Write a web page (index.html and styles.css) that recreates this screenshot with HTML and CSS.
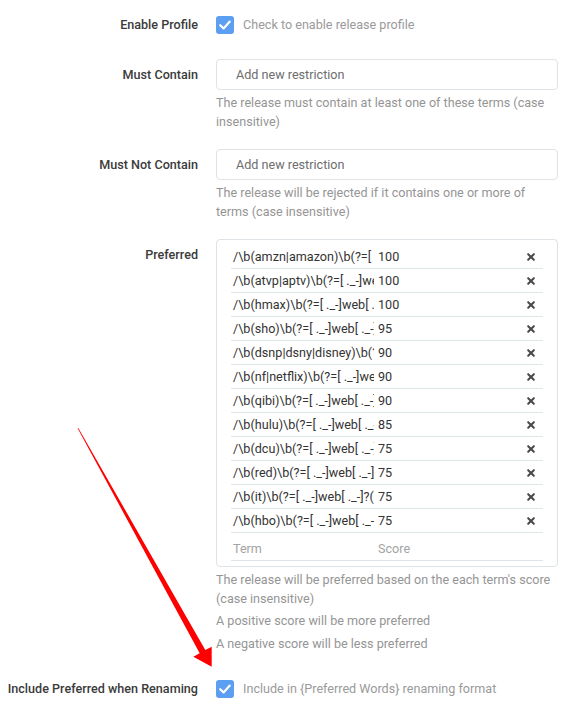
FILE: index.html
```html
<!DOCTYPE html>
<html>
<head>
<meta charset="utf-8">
<link rel="stylesheet" href="styles.css">
</head>
<body>
<div class="form">
  <div class="group">
    <div class="label">Enable Profile</div>
    <div class="field check-field">
      <span class="checkbox"><svg viewBox="0 0 18 18" width="18" height="18"><path d="M4.2 9.2 L7.6 12.4 L13.8 5.6" fill="none" stroke="#fff" stroke-width="2.2" stroke-linecap="round" stroke-linejoin="round"/></svg></span>
      <span class="check-text">Check to enable release profile</span>
    </div>
  </div>

  <div class="group">
    <div class="label">Must Contain</div>
    <div class="field">
      <div class="input"><span class="placeholder">Add new restriction</span></div>
      <p class="help">The release must contain at least one of these terms (case insensitive)</p>
    </div>
  </div>

  <div class="group">
    <div class="label">Must Not Contain</div>
    <div class="field">
      <div class="input"><span class="placeholder">Add new restriction</span></div>
      <p class="help">The release will be rejected if it contains one or more of terms (case insensitive)</p>
    </div>
  </div>

  <div class="group pref">
    <div class="label">Preferred</div>
    <div class="field">
      <div class="table">
        <div class="row"><span class="term">/\b(amzn|amazon)\b(?=[ ._-]web[ ._-]?(dl|rip)\b)/i</span><span class="score">100</span><span class="x"></span></div>
        <div class="row"><span class="term">/\b(atvp|aptv)\b(?=[ ._-]web[ ._-]?(dl|rip)\b)/i</span><span class="score">100</span><span class="x"></span></div>
        <div class="row"><span class="term">/\b(hmax)\b(?=[ ._-]web[ ._-]?(dl|rip)\b)/i</span><span class="score">100</span><span class="x"></span></div>
        <div class="row"><span class="term">/\b(sho)\b(?=[ ._-]web[ ._-]?(dl|rip)\b)/i</span><span class="score">95</span><span class="x"></span></div>
        <div class="row"><span class="term">/\b(dsnp|dsny|disney)\b(?=[ ._-]web[ ._-]?(dl|rip)\b)/i</span><span class="score">90</span><span class="x"></span></div>
        <div class="row"><span class="term">/\b(nf|netflix)\b(?=[ ._-]web[ ._-]?(dl|rip)\b)/i</span><span class="score">90</span><span class="x"></span></div>
        <div class="row"><span class="term">/\b(qibi)\b(?=[ ._-]web[ ._-]?(dl|rip)\b)/i</span><span class="score">90</span><span class="x"></span></div>
        <div class="row"><span class="term">/\b(hulu)\b(?=[ ._-]web[ ._-]?(dl|rip)\b)/i</span><span class="score">85</span><span class="x"></span></div>
        <div class="row"><span class="term">/\b(dcu)\b(?=[ ._-]web[ ._-]?(dl|rip)\b)/i</span><span class="score">75</span><span class="x"></span></div>
        <div class="row"><span class="term">/\b(red)\b(?=[ ._-]web[ ._-]?(dl|rip)\b)/i</span><span class="score">75</span><span class="x"></span></div>
        <div class="row"><span class="term">/\b(it)\b(?=[ ._-]web[ ._-]?(dl|rip)\b)/i</span><span class="score">75</span><span class="x"></span></div>
        <div class="row"><span class="term">/\b(hbo)\b(?=[ ._-]web[ ._-]?(dl|rip)\b)/i</span><span class="score">75</span><span class="x"></span></div>
        <div class="row new"><span class="term">Term</span><span class="score">Score</span></div>
      </div>
      <p class="help">The release will be preferred based on the each term's score (case insensitive)</p>
      <p class="help gap">A positive score will be more preferred</p>
      <p class="help gap">A negative score will be less preferred</p>
    </div>
  </div>

  <div class="group">
    <div class="label">Include Preferred when Renaming</div>
    <div class="field check-field">
      <span class="checkbox"><svg viewBox="0 0 18 18" width="18" height="18"><path d="M4.2 9.2 L7.6 12.4 L13.8 5.6" fill="none" stroke="#fff" stroke-width="2.2" stroke-linecap="round" stroke-linejoin="round"/></svg></span>
      <span class="check-text">Include in {Preferred Words} renaming format</span>
    </div>
  </div>
</div>

<svg class="arrow" width="568" height="711" viewBox="0 0 568 711">
  <polygon points="77.6,428.3 78.3,427.9 205.3,650.1 211.7,646.7 211.7,666.7 193.3,656.7 199.7,653.3" fill="#ff0000"/>
</svg>
</body>
</html>
```

FILE: styles.css
```css
html, body {
  margin: 0;
  padding: 0;
  background: #fff;
}
body {
  font-family: Roboto, "Liberation Sans", sans-serif;
  font-size: 12.6px;
  color: #333;
  width: 568px;
  height: 711px;
  overflow: hidden;
  position: relative;
}
.form {
  padding-top: 9px;
}
.group {
  display: grid;
  grid-template-columns: 198px 342px;
  column-gap: 18px;
  margin-bottom: 18px;
}
.group:first-child {
  margin-bottom: 19px;
}
.group.pref {
  margin-bottom: 20px;
}
.label {
  text-align: right;
  line-height: 31px;
  font-weight: 500;
  color: #3b3b3b;
  white-space: nowrap;
}
.field {
  min-width: 0;
}
.check-field {
  display: flex;
  align-items: center;
  height: 31px;
  gap: 9px;
}
.checkbox {
  width: 18px;
  height: 18px;
  border-radius: 3px;
  background: #5b9ef2;
  display: flex;
  align-items: center;
  justify-content: center;
  flex: none;
}
.checkbox svg {
  display: block;
}
.check-text {
  color: #9a9a9a;
}
.input {
  box-sizing: border-box;
  height: 31px;
  border: 1px solid #dde3e6;
  border-radius: 4px;
  padding-left: 19px;
  line-height: 29px;
}
.placeholder {
  color: #6e6e6e;
}
.help {
  margin: 4px 0 0;
  line-height: 18.5px;
  color: #959595;
}
.help.gap {
  margin-top: 4px;
}
.table {
  box-sizing: border-box;
  border: 1px solid #dde3e6;
  border-radius: 4px;
  padding: 5px 14px 5px 14px;
}
.row {
  display: flex;
  align-items: center;
  height: 23px;
  border-bottom: 1px solid #dfe6e9;
  color: #333;
  white-space: nowrap;
}
.term {
  width: 143px;
  box-sizing: border-box;
  padding-left: 2px;
  overflow: hidden;
  flex: none;
}
.score {
  padding-left: 4px;
  flex: 1;
}
.x {
  width: 24px;
  height: 23px;
  flex: none;
  position: relative;
}
.x::before, .x::after {
  content: "";
  position: absolute;
  left: 7px;
  top: 11px;
  width: 10px;
  height: 2px;
  background: #4a4a4a;
  border-radius: 1px;
}
.x::before { transform: rotate(45deg); }
.x::after { transform: rotate(-45deg); }
.row.new {
  color: #a3a3a3;
  height: 24px;
  padding-top: 3px;
}
.arrow {
  position: absolute;
  left: 0;
  top: 0;
  pointer-events: none;
}
```
